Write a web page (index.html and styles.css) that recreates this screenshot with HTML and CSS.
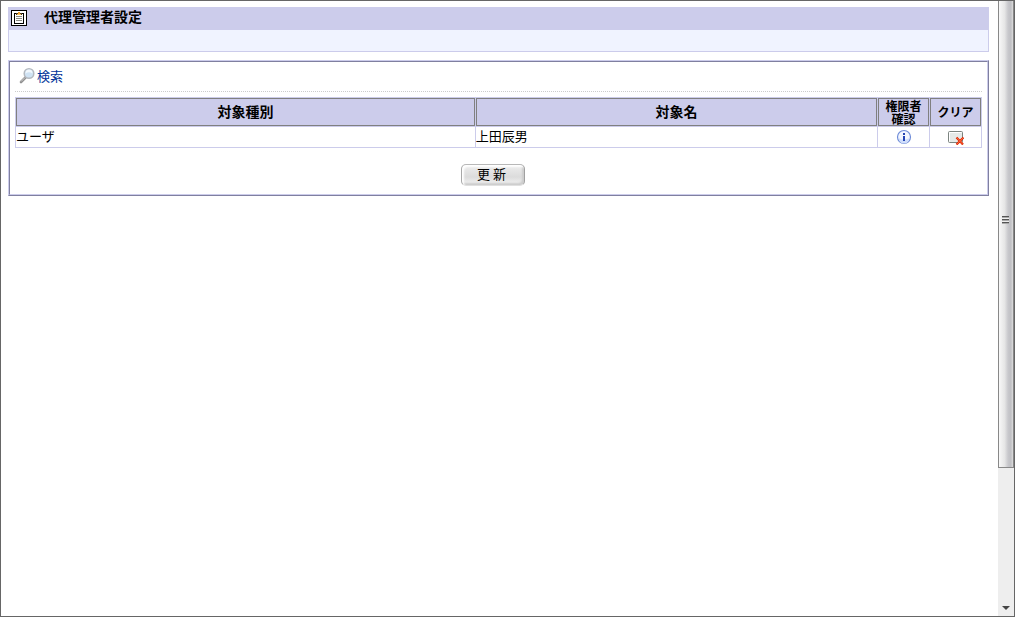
FILE: index.html
```
<!DOCTYPE html>
<html lang="ja">
<head>
<meta charset="utf-8">
<title>代理管理者設定</title>
<link rel="stylesheet" href="styles.css">
</head>
<body>
<div class="window">
  <main class="content">
    <header class="page-header">
      <div class="title-bar">
        <svg class="title-icon" width="16" height="16" viewBox="0 0 16 16" shape-rendering="crispEdges" aria-hidden="true">
          <rect width="16" height="16" fill="#000"/>
          <rect x="1" y="1" width="14" height="14" fill="#fff"/>
          <rect x="3" y="3" width="10" height="11" fill="#000"/>
          <rect x="4" y="4" width="8" height="9" fill="#fff"/>
          <rect x="5" y="3" width="6" height="2" fill="#4a3a20"/>
          <rect x="7" y="2" width="2" height="2" fill="#f0a030"/>
          <rect x="6" y="4" width="4" height="1" fill="#ffc862"/>
          <path d="M5 6h6v1H5zM5 8h6v1H5zM5 10h6v1H5z" fill="#8a8a82"/>
        </svg>
        <h1 class="title">代理管理者設定</h1>
      </div>
      <div class="sub-bar"></div>
    </header>
    <section class="panel">
      <form class="panel-inner">
        <div class="tools">
          <a class="search-link" href="#">
            <svg class="search-icon" width="17" height="17" viewBox="0 0 17 17" aria-hidden="true">
              <path d="M2 15L6.500 10.500" stroke="#909090" stroke-width="2.600" stroke-linecap="round"/>
              <path d="M2 14.500L6 10.500" stroke="#d0d0d0" stroke-width="1"/>
              <circle cx="10" cy="6.500" r="4.800" fill="#cfe2f3" stroke="#b4b9c0" stroke-width="1.500"/>
              <path d="M6.500 6.500Q10 4 13.500 6.500A3.500 4 0 0 0 6.500 6.500" fill="#f2f8fd"/>
            </svg>
            <span>検索</span>
          </a>
        </div>
        <table class="list">
          <colgroup><col class="col-type"><col class="col-name"><col class="col-icon"><col class="col-icon"></colgroup>
          <thead>
            <tr><th scope="col">対象種別</th><th scope="col">対象名</th><th class="check-head" scope="col">権限者<br>確認</th><th class="clear-head" scope="col">クリア</th></tr>
          </thead>
          <tbody>
            <tr>
              <td>ユーザ</td>
              <td>上田辰男</td>
              <td>
                <button class="icon-button" type="button" aria-label="権限者確認">
                  <svg width="16" height="16" viewBox="0 0 16 16" aria-hidden="true">
                    <circle cx="8" cy="8" r="6.500" fill="#f2f6ff" stroke="#6f8cd8" stroke-width="1.200"/>
                    <path d="M2.500 9a5.500 5.500 0 0 0 11 0Q8 12 2.500 9" fill="#cfddfb"/>
                    <path d="M7 4h2v2H7zM7 7h2v5H7z" fill="#2344b4" shape-rendering="crispEdges"/>
                  </svg>
                </button>
              </td>
              <td>
                <button class="icon-button" type="button" aria-label="クリア">
                  <svg width="16" height="16" viewBox="0 0 16 16" aria-hidden="true">
                    <rect x=".5" y="2.500" width="14" height="11" rx="1" fill="#e6eae8" stroke="#7c8480"/>
                    <path d="M1.500 12.500v-9h12" fill="none" stroke="#fff"/>
                    <path d="M8.500 8.500l6.500 7M15.500 8.500l-7 7" stroke="#dc2a08" stroke-width="2.200"/>
                    <path d="M9 9l5.500 6M15 9l-6 6" stroke="#ff6030" stroke-width="1"/>
                  </svg>
                </button>
              </td>
            </tr>
          </tbody>
        </table>
        <div class="actions"><button class="update" type="submit">更 新</button></div>
      </form>
    </section>
  </main>
  <div class="scrollbar" aria-hidden="true">
    <div class="thumb"><span class="grip"></span></div>
    <div class="track"><span class="arrow"></span></div>
  </div>
</div>
</body>
</html>
```
FILE: styles.css
```
* { box-sizing: border-box; }

body {
  margin: 0;
  background: #fff;
  color: #000;
  font: 13px/16px "Noto Sans CJK JP", sans-serif;
}

.window {
  display: flex;
  height: 100vh;
  border: 1px solid #666;
}

.content {
  flex: 1;
  min-width: 0;
  padding: 6px 9px 0 7px;
}

.page-header {
  border: 1px solid #cccceb;
  margin-bottom: 8px;
}

.title-bar {
  display: flex;
  align-items: flex-start;
  height: 22px;
  padding-left: 2px;
  background: #cccceb;
}

.title-icon { margin-top: 2px; }

.title {
  margin: 0 0 0 17px;
  font-size: 14px;
  line-height: 16px;
}

.sub-bar {
  height: 21px;
  background: #f0f3ff;
}

.panel {
  border: 1px solid;
  border-color: #cccceb #8080a0 #8080a0 #cccceb;
}

.panel-inner {
  padding: 4px 5px 8px;
  border: 1px solid;
  border-color: #8080a0 #cccceb #cccceb #8080a0;
}

.tools {
  height: 26px;
  margin-bottom: 5px;
  padding: 1px 0 0 4px;
  border-bottom: 1px dotted #cccccc;
}

.search-link {
  display: inline-flex;
  align-items: center;
  gap: 1px;
  color: #003399;
  text-decoration: none;
}

.list {
  width: 100%;
  table-layout: fixed;
  border-spacing: 1px;
  background: #cccceb;
}

.col-type { width: 47.7%; }
.col-icon { width: 51px; }

.list th {
  height: 28px;
  padding: 0 0 2px;
  border: 1px solid #808080;
  font-size: 14px;
  line-height: 13px;
}

.list .check-head {
  padding: 0;
  font-size: 12px;
}

.list .clear-head { font-size: 12px; }

.list td {
  height: 20px;
  padding: 0 0 2px;
  background: #fff;
}

.icon-button {
  display: block;
  margin: 2px auto 0;
  padding: 0;
  border: 0;
  background: none;
}

.icon-button svg { display: block; }

.actions {
  margin-top: 16px;
  padding-right: 12px;
}

.update {
  display: block;
  width: 64px;
  height: 22px;
  margin: 0 auto;
  padding: 0 2px 2px 0;
  border: 1px solid;
  border-color: #b8b8b8 #a0a0a0 #e0e0e0 #a8a8a8;
  border-radius: 5px;
  background: linear-gradient(#eee, #dcdcdc 60%, #f4f4f4);
  box-shadow: inset 2px 2px 2px #fff, inset -2px -2px 2px #ccc;
  color: #000;
  font: inherit;
}

.scrollbar {
  display: flex;
  flex-direction: column;
  width: 16px;
  background: #eee;
}

.thumb {
  display: flex;
  flex: 467 0 0;
  align-items: center;
  justify-content: center;
  padding-right: 2px;
  border: 1px solid #888;
  border-top: 0;
  background: linear-gradient(90deg, #f8f8f8, #e6e6e6 40%, #c8c8cc 65%, #c0c0c4 85%, #ddd);
}

.grip {
  width: 7px;
  height: 8px;
  margin-bottom: 28px;
  background: repeating-linear-gradient(#555 0 1px, #aaa 1px 2px, #eee 2px 3px);
}

.track {
  display: flex;
  flex: 142 0 0;
  align-items: flex-end;
  justify-content: center;
  padding-bottom: 6px;
}

.arrow {
  border: 4px solid transparent;
  border-top-color: #444;
  border-bottom: 0;
}
```
